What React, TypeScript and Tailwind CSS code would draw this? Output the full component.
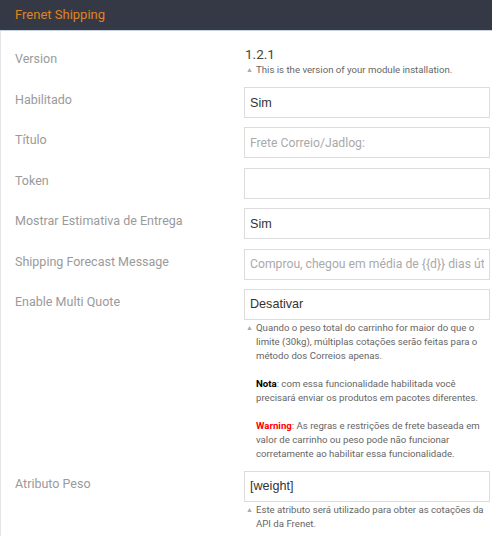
import React from "react";

const roboto = { fontFamily: "Roboto, 'Liberation Sans', sans-serif" };

function Note({ children }: { children: React.ReactNode }) {
  return (
    <div className="flex text-[9.65px] leading-[14px] text-[#666]" style={roboto}>
      <span className="w-[12px] shrink-0 text-[7px] text-[#aaa] pl-[2px] leading-[14px]">▲</span>
      <div className="flex-1 min-w-0 pr-[2px]">{children}</div>
    </div>
  );
}

function Input({ value, placeholder }: { value?: string; placeholder?: string }) {
  return (
    <div className="h-[31px] w-full min-w-0 border border-[#dcdcdc] bg-white flex items-center px-[5px]">
      <div className="flex-1 min-w-0 overflow-hidden whitespace-nowrap leading-[16px] text-[12px]">
        {value ? (
          <span className="text-[12.6px] leading-[16px] text-[#333]" style={{ fontFamily: "'Liberation Sans', Arial, sans-serif" }}>
            {value}
          </span>
        ) : placeholder ? (
          <span className="text-[12.2px] leading-[16px] text-[#aaa]" style={roboto}>
            {placeholder}
          </span>
        ) : null}
      </div>
    </div>
  );
}

function Row({ label, children, mb = "mb-[9.4px]" }: { label: string; children: React.ReactNode; mb?: string }) {
  return (
    <div className={`flex ${mb}`}>
      <div className="w-[243px] shrink-0 pl-[14px] pt-[5px] text-[12.5px] leading-[16px] text-[#9a9a9a]" style={roboto}>
        {label}
      </div>
      <div className="flex-1 min-w-0 pr-[2px]">{children}</div>
    </div>
  );
}

export default function App() {
  return (
    <div className="w-[492px] h-[536px] bg-white overflow-hidden">
      <div className="h-[31px] bg-[#343945] border-b border-[#c9d3e0] flex items-center pl-[15px]">
        <span className="text-[13px] text-[#e0831f]" style={roboto}>
          Frenet Shipping
        </span>
      </div>
      <div className="border-l border-[#e3e5e8] h-[505px] pt-[14px]">
        <div className="flex mb-[10px]">
          <div className="w-[243px] shrink-0 pl-[14px] pt-[6px] text-[12.5px] leading-[16px] text-[#9a9a9a]" style={roboto}>
            Version
          </div>
          <div className="flex-1 min-w-0">
            <div className="text-[13.5px] leading-[16px] text-[#444] pl-[1px] pt-[1px]" style={roboto}>
              1.2.1
            </div>
            <div className="mt-[1px]">
              <Note>This is the version of your module installation.</Note>
            </div>
          </div>
        </div>
        <Row label="Habilitado">
          <Input value="Sim" />
        </Row>
        <Row label="Título">
          <Input placeholder="Frete Correio/Jadlog:" />
        </Row>
        <Row label="Token">
          <Input />
        </Row>
        <Row label="Mostrar Estimativa de Entrega">
          <Input value="Sim" />
        </Row>
        <Row label="Shipping Forecast Message">
          <Input placeholder="Comprou, chegou em média de {{d}} dias úteis" />
        </Row>
        <Row label="Enable Multi Quote" mb="mb-[10px]">
          <Input value="Desativar" />
          <div className="mt-[1px]">
            <Note>
              <p>Quando o peso total do carrinho for maior do que o limite (30kg), múltiplas cotações serão feitas para o método dos Correios apenas.</p>
              <p className="mt-[14px]">
                <b className="text-black">Nota</b>: com essa funcionalidade habilitada você precisará enviar os produtos em pacotes diferentes.
              </p>
              <p className="mt-[14px]">
                <b className="text-[#f00]">Warning</b>: As regras e restrições de frete baseada em valor de carrinho ou peso pode não funcionar corretamente ao habilitar essa funcionalidade.
              </p>
            </Note>
          </div>
        </Row>
        <Row label="Atributo Peso">
          <Input value="[weight]" />
          <div className="mt-[1px]">
            <Note>Este atributo será utilizado para obter as cotações da API da Frenet.</Note>
          </div>
        </Row>
      </div>
    </div>
  );
}
